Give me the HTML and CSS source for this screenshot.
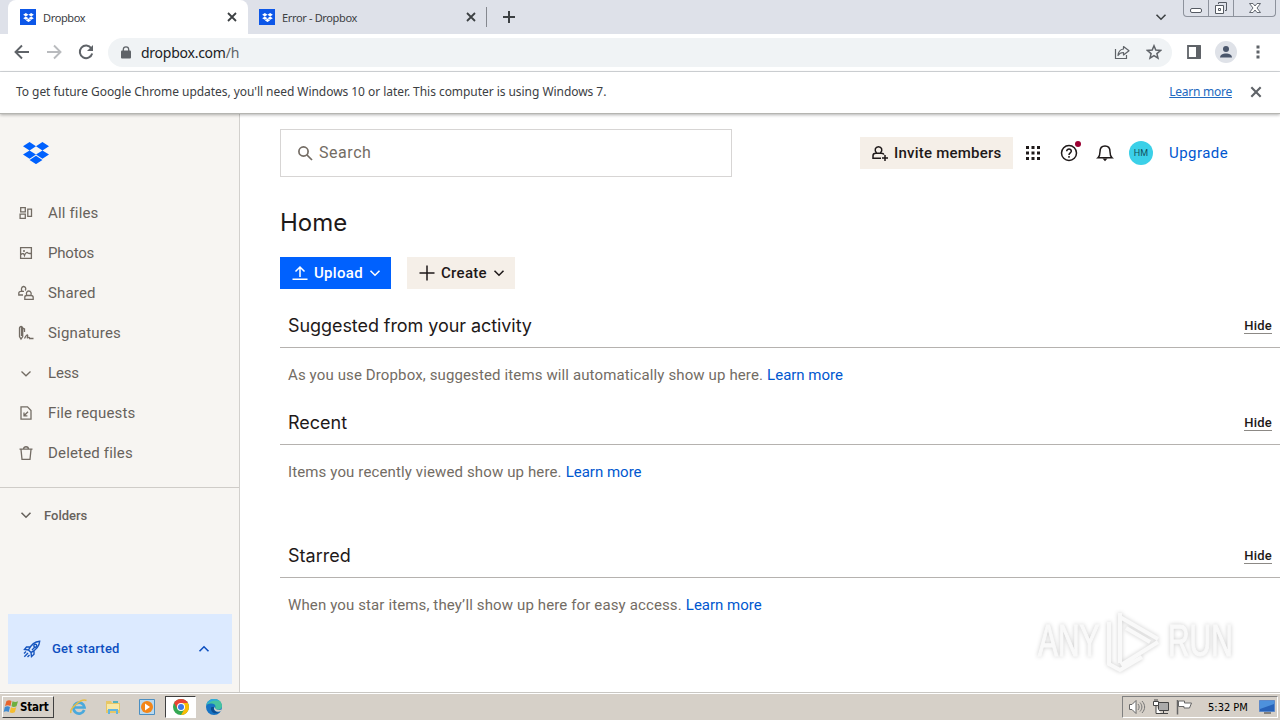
FILE: index.html
```
<!DOCTYPE html>
<html lang="en">

<head>
  <meta charset="utf-8">
  <title>Home - Dropbox</title>
  <link rel="stylesheet" href="styles.css">
</head>

<body>
  <svg class="defs" width="0" height="0">
    <symbol id="box" viewBox="0 0 25 21">
      <path d="M6.3 0 0 4l6.3 4 6.2-4zM18.7 0l-6.2 4 6.2 4L25 4zM6.3 8 0 12l6.3 4 6.2-4zM18.7 8l-6.2 4 6.2 4 6.3-4zM6.3 17.200l6.200 4 6.200-4-6.200-4z" />
    </symbol>
    <symbol id="close" viewBox="0 0 12 12">
      <path d="M2 2l8 8M10 2l-8 8" fill="none" stroke="currentColor" stroke-width="1.8" />
    </symbol>
    <symbol id="down" viewBox="0 0 12 12">
      <path d="M1.500 3.800 6 8.200l4.500-4.400" fill="none" stroke="currentColor" stroke-width="1.600" />
    </symbol>
  </svg>

  <div class="tabs">
    <div class="tab active">
      <span class="favicon"><svg width="11" height="9"><use href="#box" /></svg></span>
      <span class="tab-title">Dropbox</span>
      <svg class="tab-close" width="12" height="12"><use href="#close" /></svg>
    </div>
    <div class="tab">
      <span class="favicon"><svg width="11" height="9"><use href="#box" /></svg></span>
      <span class="tab-title">Error - Dropbox</span>
      <svg class="tab-close" width="12" height="12"><use href="#close" /></svg>
    </div>
    <span class="tab-line"></span>
    <svg class="new-tab" width="14" height="14" viewBox="0 0 14 14"><path d="M7 1v12M1 7h12" stroke="#3c4043" stroke-width="2" /></svg>
    <svg class="tab-search" width="12" height="12"><use href="#down" /></svg>
    <div class="window-buttons">
      <span class="min"><svg width="14" height="16" viewBox="0 0 14 16"><rect x="1.500" y="8.500" width="11" height="4" rx="1.500" fill="#fff" stroke="#555a63" /></svg></span>
      <span class="max"><svg width="14" height="16" viewBox="0 0 14 16"><path d="M4.500 4V2.500h8v8H11" fill="none" stroke="#555a63" /><path d="M1.500 5.500h8v8h-8zM4.500 8.500h2v2h-2z" fill="#fff" stroke="#555a63" /></svg></span>
      <span class="quit"><svg width="14" height="16" viewBox="0 0 14 16"><path d="M1.500 3.500h3.500l2 2.500 2-2.500h3.500L9 8l3.500 4.500H9L7 10l-2 2.500H1.500L5 8z" fill="#fff" stroke="#555a63" stroke-width=".9" /></svg></span>
    </div>
  </div>

  <div class="toolbar">
    <svg width="16" height="16" viewBox="0 0 16 16"><path d="M15 8H2M8 1.500 1.500 8 8 14.500" fill="none" stroke="#5f6368" stroke-width="1.900" /></svg>
    <svg width="16" height="16" viewBox="0 0 16 16"><path d="M1 8h13M8 1.500 14.500 8 8 14.500" fill="none" stroke="#b9bbbe" stroke-width="1.900" /></svg>
    <svg width="16" height="16" viewBox="0 0 16 16"><path d="M13.300 4.200A6.300 6.300 0 1 0 14.200 9.500" fill="none" stroke="#5f6368" stroke-width="2" /><path d="M15 1v6H9z" fill="#5f6368" /></svg>
    <div class="address">
      <svg width="10" height="13" viewBox="0 0 10 13"><rect y="4.500" width="10" height="8" rx="1" fill="#5f6368" /><path d="M2.300 5V3.500a2.700 2.700 0 0 1 5.400 0V5" fill="none" stroke="#5f6368" stroke-width="1.300" /></svg>
      <span class="url">dropbox.com<span class="path">/h</span></span>
      <svg class="share" width="16" height="16" viewBox="0 0 16 16"><path d="M1.500 5v9.500h11V11" fill="none" stroke="#5f6368" stroke-width="1.200" /><path d="M9.500 2.500 15 6.700 9.500 11V8.500C7 8.500 5.200 9.400 4 11.500c.3-3.500 2-6 5.500-6.500z" fill="none" stroke="#5f6368" stroke-width="1.200" stroke-linejoin="round" /></svg>
      <svg width="16" height="16" viewBox="0 0 16 16"><path d="m8 1.800 1.800 4.300 4.700.4-3.600 3.100 1.100 4.600L8 11.700l-4 2.500 1.100-4.600L1.500 6.500l4.700-.4z" fill="none" stroke="#5f6368" stroke-width="1.500" /></svg>
    </div>
    <svg class="panel" width="14" height="14" viewBox="0 0 14 14"><path d="M1 1h12v12H1z" fill="none" stroke="#5f6368" stroke-width="1.800" /><path d="M9 1h5v12H9z" fill="#5f6368" /></svg>
    <svg class="profile" width="22" height="22" viewBox="0 0 22 22"><circle cx="11" cy="11" r="11" fill="#dfe2e8" /><circle cx="11" cy="8" r="3" fill="#4a566b" /><path d="M5 16.500c0-5.500 12-5.500 12 0z" fill="#4a566b" /></svg>
    <svg class="menu" width="4" height="14" viewBox="0 0 4 14"><path d="M.5.500h3v3h-3zM.5 5.500h3v3h-3zM.5 10.500h3v3h-3z" fill="#5f6368" /></svg>
  </div>

  <div class="infobar">
    <span class="info-text">To get future Google Chrome updates, you'll need Windows 10 or later. This computer is using Windows 7.</span>
    <a class="info-link">Learn more</a>
    <svg width="14" height="14"><use href="#close" /></svg>
  </div>

  <div class="page">
    <div class="sidebar">
      <svg class="logo" width="26" height="22"><use href="#box" /></svg>
      <div class="nav">
        <div class="nav-item"><svg width="16" height="16" viewBox="0 0 16 16"><path d="M2.700 2.700h4.600v4.100H2.700zM2.100 9.200h5.200v4.100H2.100zM9.800 4.200h3.700v7.100H9.800z" /></svg><span>All files</span></div>
        <div class="nav-item photos"><svg width="16" height="16" viewBox="0 0 16 16"><path d="M2.600 2.600h10.800v10.800H2.600zM3 9.500c2-2 3-.5 3.500 1 1-3 2.500-3.500 3.500-2.500.8.700 1.500.5 3 .500M5 6h2" /></svg><span>Photos</span></div>
        <div class="nav-item"><svg width="16" height="16" viewBox="0 0 16 16"><path d="M5 10H.8V8.300c0-1.500 1-2 2.200-2H6M7.200 5.500c1.500-2-.2-4.200-1.700-4C3.200 1.800 3 4.800 4 6.300M6.800 14.300v-2.100c0-1.500 1-1.700 2.200-1.700h4c1.200 0 2.200.5 2.200 2v1.800zM8.900 10.500C7.700 8.500 8.700 6 10.700 6s3.300 2.500 2 4.500" /></svg><span>Shared</span></div>
        <div class="nav-item"><svg width="16" height="16" viewBox="0 0 16 16"><path d="M1.500 3c0-2 3.200-2 3.200 0v8.500L3 14l-1.500-2.500zM3.500 2v9M4.700 3l1.800 1v3M6.500 13.500c1.700-3.500 3-4.500 3.200-3 .2 1.200-1.200 3 .3 2.200 1.400-.8 1.500 0 1.600.8h3.900" /></svg><span>Signatures</span></div>
        <div class="nav-item less"><svg width="16" height="16" viewBox="0 0 16 16"><path d="M3.500 6.500 8 10.800l4.500-4.300" /></svg><span>Less</span></div>
        <div class="nav-item"><svg width="16" height="16" viewBox="0 0 16 16"><path d="M3 1.900h6.500L13 5.500v8.700H3zM10 6.700l-4 4M6 7.500v3.400h3.400" /></svg><span>File requests</span></div>
        <div class="nav-item"><svg width="16" height="16" viewBox="0 0 16 16"><path d="M1.500 4.100h13M5.500 4c0-3 5-3 5 0M3 4.500l1 9.800h8l1-9.800" /></svg><span>Deleted files</span></div>
      </div>
      <div class="folders"><svg width="12" height="12"><use href="#down" /></svg><span>Folders</span></div>
      <div class="get-started">
        <svg width="18" height="18" viewBox="0 0 18 18"><path d="M5.500 10C8 5 12 1.700 16.700 1.300 16.300 6 13 10 8 12.500zM7.500 7H3.500L1.500 9.500l4 .5M11 10.700v3.500L8.500 16.500 8 12.500M5 13l-3.700 3.700M3 11.500l-2 2M6.500 15l-2 2M9 10l3-3" /><circle cx="12.300" cy="5.700" r="1.500" /></svg>
        <span>Get started</span>
        <svg class="up" width="12" height="12"><use href="#down" /></svg>
      </div>
    </div>

    <div class="main">
      <div class="top">
        <div class="search">
          <svg width="16" height="16" viewBox="0 0 16 16"><circle cx="6.500" cy="6.500" r="4.600" fill="none" stroke="#736c64" stroke-width="1.700" /><path d="m10 10 5 5" stroke="#736c64" stroke-width="1.700" /></svg>
          <span>Search</span>
        </div>
        <div class="invite">
          <svg width="18" height="18" viewBox="0 0 18 18"><path d="M10 14.200H2v-2.500c0-1.700 1-2.500 2.700-2.500h5.500c1.600 0 2.500.5 2.700 1.500M5.500 9C3 6 4.300 2.700 7.500 2.700S12 6 9.500 9M14 11v6M11 14h6" /></svg>
          <span>Invite members</span>
        </div>
        <svg class="grid" width="14" height="14" viewBox="0 0 14 14"><path d="M0 0h3v3H0zM5.500 0h3v3h-3zM11 0h3v3h-3zM0 5.500h3v3H0zM5.500 5.500h3v3h-3zM11 5.500h3v3h-3zM0 11h3v3H0zM5.500 11h3v3h-3zM11 11h3v3h-3z" fill="#1e1919" /></svg>
        <div class="help">
          <svg width="18" height="18" viewBox="0 0 18 18"><circle cx="9" cy="9" r="7.500" fill="none" stroke="#1e1919" stroke-width="1.500" /><path d="M6.700 7.200c0-3 4.800-2.800 4.600 0C11.200 8.900 9 8.800 9 11M9 12v1.700" fill="none" stroke="#1e1919" stroke-width="1.500" /></svg>
          <span class="dot"></span>
        </div>
        <svg class="bell" width="18" height="18" viewBox="0 0 18 18"><path d="M2 13.700c1.700-1.500 2-3 2-6C4 4.500 5.500 2 9 2s5 2.500 5 5.700c0 3 .3 4.500 2 6z" fill="none" stroke="#1e1919" stroke-width="1.500" /><path d="M6.500 14.500h5L9 17.200z" fill="#1e1919" /></svg>
        <span class="avatar">HM</span>
        <a class="upgrade">Upgrade</a>
      </div>

      <h1>Home</h1>
      <div class="actions">
        <div class="button upload">
          <svg width="16" height="16" viewBox="0 0 16 16"><path d="M8 12V2M3.500 6.500 8 2l4.500 4.500M.5 14.300h15" /></svg>
          <span>Upload</span>
          <svg class="caret" width="12" height="12"><use href="#down" /></svg>
        </div>
        <div class="button create">
          <svg width="16" height="16" viewBox="0 0 16 16"><path d="M8 .5v15M.5 8h15" /></svg>
          <span>Create</span>
          <svg class="caret" width="12" height="12"><use href="#down" /></svg>
        </div>
      </div>

      <div class="section">
        <div class="section-head"><h2 class="suggested">Suggested from your activity</h2><span class="hide">Hide</span></div>
        <p><span>As you use Dropbox, suggested items will automatically show up here.</span><a>Learn more</a></p>
      </div>
      <div class="section recent">
        <div class="section-head"><h2>Recent</h2><span class="hide">Hide</span></div>
        <p><span>Items you recently viewed show up here.</span><a>Learn more</a></p>
      </div>
      <div class="section">
        <div class="section-head"><h2>Starred</h2><span class="hide">Hide</span></div>
        <p><span>When you star items, they’ll show up here for easy access.</span><a>Learn more</a></p>
      </div>
    </div>
  </div>

  <div class="taskbar">
    <div class="start">
      <svg width="17" height="16" viewBox="0 0 16 16"><path d="M3 2c2-1.300 3.500-1 5 0L7 7C5 6 3.500 6 1.500 7z" fill="#e8642c" /><path d="M9 2.300c2 1 3.500 1 5.500 0l-1.500 5c-2 1-3.500 1-5 0z" fill="#6eaf3f" /><path d="M1.300 8c2-1.300 3.500-1 5.200 0l-1.300 5c-2-1.200-3.500-1-5 0z" fill="#3f8ad0" /><path d="M7.500 8.300c2 1 3.300 1 5.300 0l-1.500 5c-2 1-3.500 1-5.100 0z" fill="#f5bd30" /></svg>
      <span>Start</span>
    </div>
    <div class="task">
      <svg width="18" height="18" viewBox="0 0 18 18"><path d="M14.200 12A5.500 5.500 0 1 1 14.500 9.500H5" fill="none" stroke="#4aa9dc" stroke-width="2.700" /><path d="M1 15C-1 11 11 0 16.500 2.500" fill="none" stroke="#e7bd45" stroke-width="1.500" /></svg>
    </div>
    <div class="task">
      <svg width="18" height="18" viewBox="0 0 18 18"><path d="M2 3h5l1 2h8v10H2z" fill="#e7c766" /><path d="M3 6h12v6H3z" fill="#f8e8a5" /><path d="M4 16v-5h10v5h-2v-3H6v3z" fill="#62b5df" /><path d="M9 3h5v2H9z" fill="#55b3bb" /></svg>
    </div>
    <div class="task">
      <svg width="18" height="18" viewBox="0 0 18 18"><path d="M1.500 1.500h15v15h-15z" fill="#b9d9ef" stroke="#4b8fc2" /><circle cx="9" cy="9" r="6" fill="#f38618" /><path d="m7 5.500 5 3.500-5 3.500z" fill="#fff" /></svg>
    </div>
    <div class="task current">
      <svg width="16" height="16" viewBox="0 0 16 16"><circle cx="8" cy="8" r="8" fill="#34a853" /><path d="M8 8 1.100 4A8 8 0 0 1 14.900 4z" fill="#ea4335" /><path d="M8 4h6.900A8 8 0 0 1 8 16l3.500-6z" fill="#fbbc04" /><path d="M1.100 4 4.500 10 8 4z" fill="#ea4335" /><circle cx="8" cy="8" r="4" fill="#fff" /><circle cx="8" cy="8" r="3" fill="#3b78e7" /></svg>
    </div>
    <div class="task">
      <svg width="18" height="18" viewBox="0 0 18 18"><circle cx="9" cy="9" r="8" fill="#1673c4" /><path d="M1.300 7C3-1.500 17-1 17 8c0 4-5 4.500-7 2.500 2-4.500-3-6.500-8.700-3.500z" fill="#46c3a0" /><path d="M1.300 7C3 0 11-.5 14.500 3 9 1.500 5 3 1.300 7z" fill="#2fa9de" /><path d="M6.500 9C4.500 12 8 17.500 14.500 14.500 11 15 8 12 9 9z" fill="#0b4d91" /><path d="M9.500 8.500c0 2.500 3 4.200 7.500 3l-1 1.500c-3 1.500-7 .5-7-2.500z" fill="#d6d0c8" /></svg>
    </div>
    <div class="tray">
      <svg width="18" height="16" viewBox="0 0 18 16"><path d="M1.500 5.500H4L8 1.500v13l-4-4H1.500z" fill="#fff" stroke="#666" /><path d="M10 5c1.500 2 1.500 4 0 6M12 3.500c2.500 3 2.500 6 0 9M14 2c3.500 4 3.500 8 0 12" fill="none" stroke="#777" /></svg>
      <svg width="16" height="16" viewBox="0 0 16 16"><path d="M5.500 3.500h10v8h-10zM8 14.500h7M10.500 12v2" fill="#aaa" stroke="#444" /><path d="M.5 2.500h5v4h-5zM2 0v2M4 0v2M3 7v7.500h5" fill="#fff" stroke="#444" /></svg>
      <svg width="17" height="16" viewBox="0 0 17 16"><path d="M1.500 1v14.500" stroke="#666" stroke-width="1.500" /><path d="M2.500 2h6v2h7l-2 5H8V7.500H2.500z" fill="#fff" stroke="#666" /></svg>
      <span class="clock">5:32 PM</span>
      <svg width="16" height="14" viewBox="0 0 16 14"><path d="M.5.500h15v11H.5z" fill="#2863b9" stroke="#5d89c9" /><path d="M1 1h14v3L1 9z" fill="#4d91dc" /><path d="M5 13h7" stroke="#333" /></svg>
    </div>
  </div>

  <div class="watermark">
    <span>ANY</span>
    <svg width="60" height="66" viewBox="0 0 60 66"><path d="M16 9 54 31M16 5v50M54 34 17 57M5 14v42l11 6 22-13M22 20l24 14" /></svg>
    <span>RUN</span>
  </div>
</body>

</html>
```
FILE: styles.css
```
* {
  box-sizing: border-box;
}

body {
  margin: 0;
  width: 1280px;
  height: 720px;
  overflow: hidden;
  display: flex;
  flex-direction: column;
  background: #fff;
  font-family: Roboto, sans-serif;
  color: #1e1919;
}

svg {
  flex: none;
  display: block;
}

span, a, h1, h2 {
  white-space: nowrap;
}

.defs {
  position: absolute;
}

/* browser chrome */
.tabs {
  height: 34px;
  flex: none;
  display: flex;
  align-items: center;
  background: #dee1e9;
  padding-left: 8px;
  font: 11px "Noto Sans", sans-serif;
  letter-spacing: -0.35px;
  color: #3c4043;
}

.tab {
  width: 239px;
  height: 34px;
  display: flex;
  align-items: center;
  padding: 0 10px 0 12px;
}

.tab.active {
  width: 240px;
  background: #fff;
  border-radius: 8px 8px 0 0;
}

.tab:not(.active) {
  padding-left: 11px;
}

.favicon {
  width: 16px;
  height: 16px;
  background: #0d57e8;
  fill: #fff;
  display: flex;
  align-items: center;
  justify-content: center;
  margin-right: 7px;
}

.tab-close {
  margin-left: auto;
}

.tab-line {
  width: 1px;
  height: 20px;
  background: #85888f;
  margin-left: -1px;
}

.new-tab {
  margin-left: 15px;
}

.tab-search {
  margin-left: auto;
  margin-right: 16px;
}

.window-buttons {
  display: flex;
  align-self: flex-start;
  width: 93px;
  height: 17px;
  border: 1px solid #8d929c;
  border-top: 0;
  border-radius: 0 0 4px 4px;
  margin-right: 4px;
}

.window-buttons span {
  display: flex;
  justify-content: center;
  width: 25px;
  border-right: 1px solid #8d929c;
}

.window-buttons .quit {
  flex: 1;
  border: 0;
}

.toolbar {
  height: 38px;
  flex: none;
  display: flex;
  align-items: center;
  gap: 16px;
  padding: 0 20px 1px 14px;
  border-bottom: 1px solid #d5d8dc;
}

.address {
  flex: 1;
  height: 29px;
  margin-left: -2px;
  border-radius: 15px;
  background: #f0f3f5;
  display: flex;
  align-items: center;
  padding: 0 10px 0 13px;
  gap: 10px;
}

.url {
  font: 14px "Noto Sans", sans-serif;
  letter-spacing: -0.25px;
  color: #202124;
}

.path {
  color: #5f6368;
}

.share {
  margin-left: auto;
  margin-right: 6px;
}

.panel {
  margin-left: -1px;
}

.profile {
  margin-left: -2px;
}

.menu {
  margin-left: 3px;
}

.infobar {
  height: 42px;
  flex: none;
  display: flex;
  align-items: center;
  padding: 0 17px 2px 16px;
  border-bottom: 1px solid #b5b5b1;
  box-shadow: 0 1px 3px rgba(0, 0, 0, 0.3);
  position: relative;
  font: 12px "Noto Sans", sans-serif;
  letter-spacing: -0.05px;
  color: #3c4043;
}

.infobar svg {
  color: #5f6368;
}

.info-link {
  margin-left: auto;
  margin-right: 17px;
  letter-spacing: -0.25px;
  color: #2269c0;
  text-decoration: underline;
}

/* page */
.page {
  flex: 1;
  min-height: 0;
  display: flex;
}

.sidebar {
  width: 240px;
  display: flex;
  flex-direction: column;
  background: #f7f5f2;
  border-right: 1px solid #d2d0cd;
  color: #67625c;
}

.logo {
  margin: 28px 0 0 23px;
  fill: #0061fe;
}

.nav {
  padding: 29px 0 14px 18px;
  border-bottom: 1px solid #cfccc8;
}

.nav-item {
  height: 40px;
  display: flex;
  align-items: center;
  gap: 14px;
  font-size: 15px;
  letter-spacing: 0.17px;
}

.nav-item.photos,
.nav-item.less {
  letter-spacing: -0.2px;
}

.nav-item svg {
  fill: none;
  stroke: #736c64;
  stroke-width: 1.3;
}

.folders {
  height: 54px;
  display: flex;
  align-items: center;
  padding-left: 20px;
  gap: 12px;
  font-size: 13px;
  font-weight: 500;
}

.get-started {
  height: 70px;
  margin: auto 7px 8px 8px;
  background: #dceaff;
  color: #0d4fc0;
  display: flex;
  align-items: center;
  padding: 0 22px 1px 15px;
  gap: 11px;
  font-size: 13px;
  font-weight: 500;
  letter-spacing: 0.25px;
}

.get-started svg:first-child {
  fill: none;
  stroke: #1655be;
  stroke-width: 1.4;
}

.up {
  margin-left: auto;
  transform: rotate(180deg);
}

.main {
  flex: 1;
  padding: 14px 0 0 40px;
}

.top {
  height: 49px;
  display: flex;
  align-items: center;
}

.search {
  width: 452px;
  height: 48px;
  border: 1px solid #d7d5d4;
  display: flex;
  align-items: center;
  padding-left: 16px;
  gap: 6px;
  font-size: 16px;
  letter-spacing: 0.55px;
  color: #736c64;
}

.invite {
  width: 153px;
  height: 32px;
  margin-left: 128px;
  padding-left: 11px;
  background: #f5efe8;
  display: flex;
  align-items: center;
  gap: 5px;
  font-size: 15px;
  font-weight: 500;
  letter-spacing: 0.22px;
}

.invite svg {
  fill: none;
  stroke: #1e1919;
  stroke-width: 1.5;
}

.grid {
  margin-left: 13px;
}

.help {
  position: relative;
  margin-left: 20px;
}

.dot {
  position: absolute;
  left: 15px;
  top: -3px;
  width: 6px;
  height: 6px;
  border-radius: 50%;
  background: #9b0032;
}

.bell {
  margin-left: 18px;
}

.avatar {
  width: 24px;
  height: 24px;
  margin-left: 15px;
  border-radius: 50%;
  background: #3bd0e8;
  font-size: 9px;
  line-height: 24px;
  text-align: center;
  color: #14505d;
}

.upgrade {
  margin-left: 16px;
  font-size: 15px;
  letter-spacing: 0.45px;
  line-height: 20px;
  padding-top: 1px;
  color: #0057cf;
}

h1 {
  margin: 30px 0 0;
  font: 24px/32px Inter, sans-serif;
}

.actions {
  display: flex;
  gap: 16px;
  margin-top: 18px;
}

.button {
  height: 32px;
  display: flex;
  align-items: center;
  padding-left: 12px;
  gap: 6px;
  font-size: 15px;
  font-weight: 500;
  letter-spacing: 0.3px;
}

.button svg:first-child {
  fill: none;
  stroke: currentColor;
  stroke-width: 1.5;
}

.caret {
  margin-left: auto;
  margin-right: 10px;
}

.upload {
  width: 111px;
  background: #0061fe;
  color: #fff;
}

.create {
  width: 108px;
  background: #f5efe8;
}

.section {
  height: 97px;
  padding-top: 15px;
}

.recent {
  height: 133px;
}

.section-head {
  height: 44px;
  border-bottom: 1px solid #b5b2af;
  padding: 0 8px;
  display: flex;
  align-items: center;
  justify-content: space-between;
}

h2 {
  margin: 0;
  font: 18px/24px Inter, sans-serif;
}

.suggested {
  letter-spacing: -0.07px;
}

.hide {
  font-size: 13px;
  font-weight: 500;
  line-height: 15px;
  letter-spacing: 0.25px;
  border-bottom: 1px solid #8c8985;
}

p {
  margin: 0;
  padding: 17px 8px 0;
  display: flex;
  gap: 4px;
  font-size: 15px;
  line-height: 20px;
  color: #736c64;
}

p span {
  letter-spacing: 0.125px;
}

p a {
  color: #0057cf;
}

/* taskbar */
.taskbar {
  height: 28px;
  flex: none;
  display: flex;
  align-items: center;
  background: #d6d0c8;
  border-top: 1px solid #c9c7c3;
  box-shadow: inset 0 1px 0 #fff;
  padding: 1px 2px 0;
}

.start {
  width: 52px;
  height: 22px;
  display: flex;
  align-items: center;
  border: 1px solid;
  border-color: #fff #404040 #404040 #fff;
  font: bold 11.5px "DejaVu Sans Condensed", "DejaVu Sans", sans-serif;
  letter-spacing: -0.2px;
  color: #000;
  margin-right: 8px;
}

.task {
  width: 34px;
  height: 22px;
  display: flex;
  align-items: center;
  justify-content: center;
}

.current {
  width: 31px;
  background: #fff;
  border: 1px solid;
  border-color: #404040 #fff #fff #404040;
  margin: 0 1px;
}

.tray {
  width: 156px;
  height: 22px;
  margin-left: auto;
  display: flex;
  align-items: center;
  gap: 7px;
  padding-left: 5px;
  border: 1px solid;
  border-color: #808080 #fff #fff #808080;
}

.clock {
  margin: 0 4px 0 8px;
  font: 11px "DejaVu Sans Condensed", sans-serif;
  color: #000;
}

/* recorder logo over the page */
.watermark {
  position: absolute;
  left: 1038px;
  top: 607px;
  height: 68px;
  display: flex;
  align-items: center;
  gap: 4px;
  color: #f9f9f9;
  font: 44px/68px "Liberation Sans Narrow", "Liberation Sans", sans-serif;
  -webkit-text-stroke: 1px #f9f9f9;
  filter: drop-shadow(0 0 2px rgba(0, 0, 0, 0.2));
}

.watermark span {
  width: 62px;
  transform: scaleX(0.68);
  transform-origin: left;
}

.watermark svg {
  fill: none;
  stroke: #f9f9f9;
  stroke-width: 4;
}
```
